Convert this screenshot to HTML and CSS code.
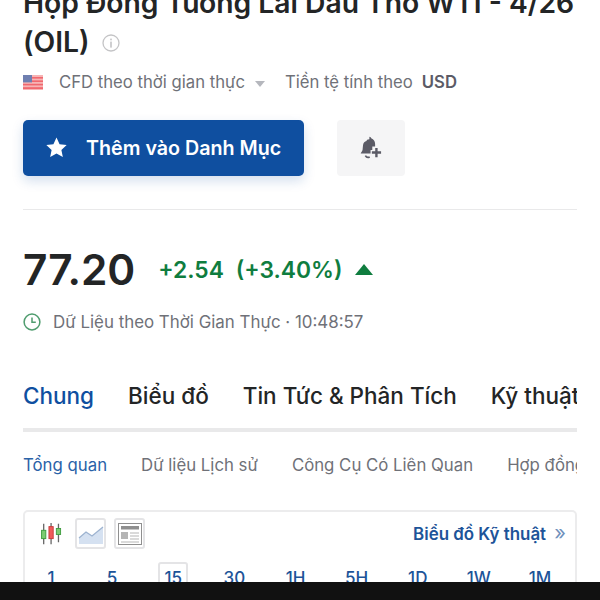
FILE: index.html
```html
<!DOCTYPE html>
<html lang="vi">
<head>
    <meta charset="UTF-8">
    <meta name="viewport" content="width=device-width, initial-scale=1.0">
    <title>Hợp Đồng Tương Lai Dầu Thô WTI</title>
    <link rel="stylesheet" href="styles.css">
</head>
<body>
    <main class="page">
        <!-- Title -->
        <h1 class="title">Hợp Đồng Tương Lai Dầu Thô WTI - 4/26 (OIL)
            <svg class="info-icon" viewBox="0 0 18 18" width="18" height="18">
                <circle cx="9" cy="9" r="8" fill="none" stroke="#c4c4c6" stroke-width="1.3"/>
                <rect x="8.2" y="7.6" width="1.6" height="6" fill="#c4c4c6"/>
                <rect x="8.2" y="4.6" width="1.6" height="1.7" fill="#c4c4c6"/>
            </svg>
        </h1>

        <!-- Market info -->
        <div class="meta">
            <svg class="flag" viewBox="0 0 20 15" width="20" height="15">
                <rect width="20" height="15" fill="#f7b4b4"/>
                <rect y="2" width="20" height="1.6" fill="#f0686e"/>
                <rect y="5.4" width="20" height="1.6" fill="#f0686e"/>
                <rect y="8.8" width="20" height="1.6" fill="#f0686e"/>
                <rect y="12.2" width="20" height="1.8" fill="#f0686e"/>
                <rect width="9" height="7.4" fill="#6f7fb0"/>
            </svg>
            <span class="meta-text">CFD theo thời gian thực</span>
            <span class="caret"></span>
            <span class="meta-text">Tiền tệ tính theo</span>
            <b class="currency">USD</b>
        </div>

        <!-- Buttons -->
        <div class="actions">
            <button class="btn-watch" type="button">
                <svg viewBox="0 0 24 24" width="23" height="23">
                    <path d="M12 1.6l3.2 6.9 7.4.9-5.5 5.1 1.5 7.4-6.6-3.7-6.6 3.7 1.5-7.4-5.5-5.1 7.4-.9z" fill="#fff"/>
                </svg>
                Thêm vào Danh Mục
            </button>
            <button class="btn-alert" type="button" aria-label="Alert">
                <svg viewBox="0 0 24 24" width="26" height="26">
                    <path d="M10.5 1.5c1 0 1.600.7 1.700 1.500 2.400.8 3.500 2.800 3.600 5.200v2.300h-2.600v3.400h-1.600v3.100H2.500c.1-.9 1.400-1.700 1.700-3.200.3-1.600.2-3.300.5-4.800.4-2 1.400-3.100 3.200-3.500.1-.8.600-1.500 2.600-1.500z" fill="#5b5b66"/>
                    <path d="M6.800 19c.8 1.500 2.600 2 4 1.300" fill="none" stroke="#5b5b66" stroke-width="1.500"/>
                    <path d="M17 12v8.500M12.800 16.200h8.500" fill="none" stroke="#5b5b66" stroke-width="2.200"/>
                </svg>
            </button>
        </div>

        <hr class="divider">

        <!-- Price -->
        <div class="quote">
            <span class="price">77.20</span>
            <span class="change">+2.54</span>
            <span class="change">(+3.40%)</span>
            <span class="arrow-up"></span>
        </div>

        <div class="status">
            <svg viewBox="0 0 18 18" width="18" height="18">
                <circle cx="9" cy="9" r="7.900" fill="none" stroke="#4f9c6e" stroke-width="1.500"/>
                <path d="M9 4.500v4.800h3.800" fill="none" stroke="#4f9c6e" stroke-width="1.500"/>
            </svg>
            <span>Dữ Liệu theo Thời Gian Thực · 10:48:57</span>
        </div>

        <!-- Tabs -->
        <nav class="tabs">
            <a class="tab active">Chung</a>
            <a class="tab">Biểu đồ</a>
            <a class="tab">Tin Tức &amp; Phân Tích</a>
            <a class="tab">Kỹ thuật</a>
        </nav>

        <nav class="subtabs">
            <a class="subtab active">Tổng quan</a>
            <a class="subtab">Dữ liệu Lịch sử</a>
            <a class="subtab">Công Cụ Có Liên Quan</a>
            <a class="subtab">Hợp đồng</a>
        </nav>

        <!-- Chart box -->
        <section class="chart-box">
            <div class="chart-head">
                <svg class="candles" viewBox="0 0 26 24" width="24" height="24">
                    <path d="M4 1v22M12 0v23M20 1v20" stroke="#666" stroke-width="1.400"/>
                    <rect x="1.700" y="8" width="4.600" height="9" fill="#7ccb72" stroke="#3f9c3f"/>
                    <rect x="9.700" y="4" width="4.600" height="13" fill="#ee5a5a" stroke="#c73a3a"/>
                    <rect x="17.700" y="6" width="4.600" height="6.500" fill="#7ccb72" stroke="#3f9c3f"/>
                </svg>
                <span class="chart-type">
                    <svg viewBox="0 0 26 22" width="26" height="22">
                        <path d="M1 15l7-6 6 4 11-9v17H1z" fill="#d5e1f1"/>
                        <path d="M1 15l7-6 6 4 11-9" fill="none" stroke="#9db3d0" stroke-width="1.300"/>
                    </svg>
                </span>
                <span class="chart-type chart-type-news">
                    <svg viewBox="0 0 24 22" width="24" height="22">
                        <rect x="0.500" y="0.500" width="23" height="21" fill="#fff" stroke="#8f8f8f"/>
                        <rect x="3" y="3" width="18" height="3.500" fill="#8f8f8f"/>
                        <rect x="3" y="9" width="7" height="7" fill="#b5b5b5"/>
                        <path d="M12 10h9M12 13h9M12 16h9M3 19h18" stroke="#b5b5b5"/>
                    </svg>
                </span>
                <a class="chart-link">Biểu đồ Kỹ thuật <span class="chevrons">»</span></a>
            </div>
            <div class="timeframes">
                <span class="tf">1</span>
                <span class="tf">5</span>
                <span class="tf selected">15</span>
                <span class="tf">30</span>
                <span class="tf">1H</span>
                <span class="tf">5H</span>
                <span class="tf">1D</span>
                <span class="tf">1W</span>
                <span class="tf">1M</span>
            </div>
        </section>
    </main>

    <div class="bottom-bar"></div>
</body>
</html>
```

FILE: styles.css
```css
* {
    margin: 0;
    padding: 0;
    box-sizing: border-box;
    font-family: Inter, "Noto Sans", sans-serif;
}
html,
body {
    height: 600px;
    overflow: hidden;
    background: #fff;
}
.page {
    padding: 0 23px;
    width: 600px;
}
.title {
    margin-top: -16px;
    font-size: 28.250px;
    line-height: 39px;
    font-weight: 600;
    color: #232526;
}
.info-icon {
    margin-left: 5px;
    vertical-align: 0;
}
.meta {
    display: flex;
    align-items: center;
    margin-top: 9px;
    height: 22px;
    font-size: 16.700px;
    color: #6f7178;
}
.flag {
    margin-right: 16px;
}
.caret {
    width: 0;
    height: 0;
    margin: 3px 20px 0 10px;
    border-left: 5.500px solid transparent;
    border-right: 5.500px solid transparent;
    border-top: 6px solid #b5b7bd;
}
.currency {
    margin-left: 9px;
    font-weight: 600;
    color: #5b5b66;
}
.actions {
    display: flex;
    gap: 33px;
    margin-top: 27px;
}
.btn-watch {
    display: flex;
    align-items: center;
    gap: 18px;
    width: 281px;
    height: 56px;
    padding: 0 0 1px 22px;
    border: none;
    border-radius: 5px;
    background: #0f4fa0;
    box-shadow: 0 5px 12px rgba(15, 79, 160, 0.18);
    color: #fff;
    font-size: 19.700px;
    font-weight: 600;
}
.btn-alert {
    display: flex;
    align-items: center;
    justify-content: center;
    width: 68px;
    height: 56px;
    border: none;
    border-radius: 4px;
    background: #f5f5f6;
}
.divider {
    height: 1px;
    margin-top: 33px;
    border: none;
    background: #e9e9ea;
}
.quote {
    display: flex;
    align-items: center;
    margin-top: 34px;
    height: 51px;
}
.price {
    margin-right: 23px;
    font-size: 42.400px;
    font-weight: 600;
    color: #232526;
}
.change {
    margin-right: 12px;
    font-size: 22.800px;
    font-weight: 600;
    color: #0f7d3f;
}
.arrow-up {
    width: 0;
    height: 0;
    margin-left: 1px;
    border-left: 9px solid transparent;
    border-right: 9px solid transparent;
    border-bottom: 11px solid #0f7d3f;
}
.status {
    display: flex;
    align-items: center;
    gap: 12px;
    margin-top: 15px;
    height: 24px;
    font-size: 16.900px;
    color: #6f7178;
}
.tabs {
    display: flex;
    gap: 34px;
    margin-top: 45px;
    overflow: hidden;
    border-bottom: 4px solid #e9e9ea;
    white-space: nowrap;
}
.tab {
    flex-shrink: 0;
    height: 53px;
    margin-bottom: -4px;
    padding-top: 2px;
    font-size: 22.500px;
    line-height: 30px;
    font-weight: 500;
    color: #232526;
}
.tab.active {
    border-bottom: 4px solid #0f4fa0;
    color: #0f4fa0;
}
.subtabs {
    display: flex;
    gap: 34px;
    margin-top: 22px;
    overflow: hidden;
    white-space: nowrap;
    font-size: 16.800px;
    line-height: 22px;
    color: #6f7178;
}
.subtab {
    flex-shrink: 0;
}
.subtab.active {
    color: #2a62a8;
}
.chart-box {
    height: 100px;
    margin-top: 34px;
    padding: 6px 9px 0 15px;
    border: 2px solid #ececed;
    border-radius: 5px;
}
.chart-head {
    display: flex;
    align-items: center;
    gap: 11px;
}
.chart-type {
    display: flex;
    align-items: center;
    justify-content: center;
    width: 31px;
    height: 31px;
    border: 2px solid #e4e4e6;
    border-radius: 3px;
}
.chart-type-news {
    margin-left: -3px;
}
.chart-link {
    margin-left: auto;
    font-size: 16.900px;
    font-weight: 600;
    color: #1d5499;
}
.chevrons {
    margin-left: 4px;
    font-size: 20px;
    line-height: 20px;
    font-weight: 400;
    color: #6f90bc;
}
.timeframes {
    display: flex;
    justify-content: space-between;
    margin: 13px 0 0 -4px;
    padding: 0 11px 0 0;
}
.tf {
    min-width: 30px;
    height: 32px;
    font-size: 17px;
    line-height: 32px;
    font-weight: 500;
    text-align: center;
    color: #1d5499;
}
.tf.selected {
    border: 2px solid #e4e4e6;
    border-radius: 3px;
    line-height: 28px;
}
.bottom-bar {
    position: fixed;
    left: 0;
    right: 0;
    bottom: 0;
    height: 18px;
    background: #111;
}
```
